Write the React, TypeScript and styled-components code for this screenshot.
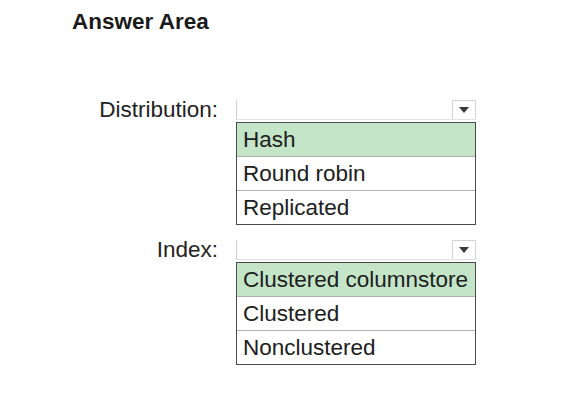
import { createGlobalStyle, styled } from "styled-components";

type Field = {
  label: string;
  options: string[];
  selected: number;
};

const fields: Field[] = [
  { label: "Distribution:", options: ["Hash", "Round robin", "Replicated"], selected: 0 },
  {
    label: "Index:",
    options: ["Clustered columnstore", "Clustered", "Nonclustered"],
    selected: 0,
  },
];

function App() {
  return (
    <>
      <GlobalStyle />
      <Page>
        <Title>Answer Area</Title>
        <Form>
          {fields.map((f) => (
            <Row key={f.label}>
              <Label>{f.label}</Label>
              <Control>
                <Select>
                  <Arrow>
                    <svg width="10" height="6" viewBox="0 0 10 6">
                      <path d="M0 0 L10 0 L5 6 Z" fill="#3a3a3a" />
                    </svg>
                  </Arrow>
                </Select>
                <List>
                  {f.options.map((o, i) => (
                    <Option key={o} $active={i === f.selected}>
                      {o}
                    </Option>
                  ))}
                </List>
              </Control>
            </Row>
          ))}
        </Form>
      </Page>
    </>
  );
}

const GlobalStyle = createGlobalStyle`
  body {
    margin: 0;
    background: #fff;
    font-family: "Liberation Sans", Arial, sans-serif;
    color: #1e1e1e;
  }
`;
const Page = styled.div`
  width: 574px;
  height: 401px;
  padding: 8px 0 0 72px;
  box-sizing: border-box;
`;
const Title = styled.h1`
  margin: 0;
  font-size: 22.5px;
  font-weight: bold;
  line-height: 27px;
  color: #1a1a1a;
`;
const Form = styled.div`
  display: flex;
  flex-direction: column;
  gap: 15px;
  margin-top: 65px;
`;
const Row = styled.div`
  display: flex;
  align-items: flex-start;
  gap: 18px;
`;
const Label = styled.div`
  width: 146px;
  text-align: right;
  font-size: 22.5px;
  line-height: 20px;
  color: #222;
`;
const Control = styled.div`
  width: 240px;
  display: flex;
  flex-direction: column;
  gap: 2px;
`;
const Select = styled.div`
  height: 19px;
  border-left: 1px solid #cfcfcf;
  border-bottom: 1px solid #e2e2e2;
  display: flex;
  justify-content: flex-end;
`;
const Arrow = styled.div`
  width: 24px;
  height: 19px;
  border: 1px solid #d4d4d4;
  border-bottom: none;
  box-sizing: border-box;
  display: flex;
  align-items: center;
  justify-content: center;
  background: #fff;
`;
const List = styled.div`
  border: 1.5px solid #4a4a4a;
  display: flex;
  flex-direction: column;
`;
const Option = styled.div<{ $active: boolean }>`
  height: 33px;
  line-height: 33px;
  padding-left: 6px;
  font-size: 22.5px;
  color: #202020;
  background: ${(p) => (p.$active ? "#c4e5c8" : "#fff")};
  white-space: nowrap;
  & + & {
    border-top: 1px solid #b0b0b0;
  }
`;

export default App;
